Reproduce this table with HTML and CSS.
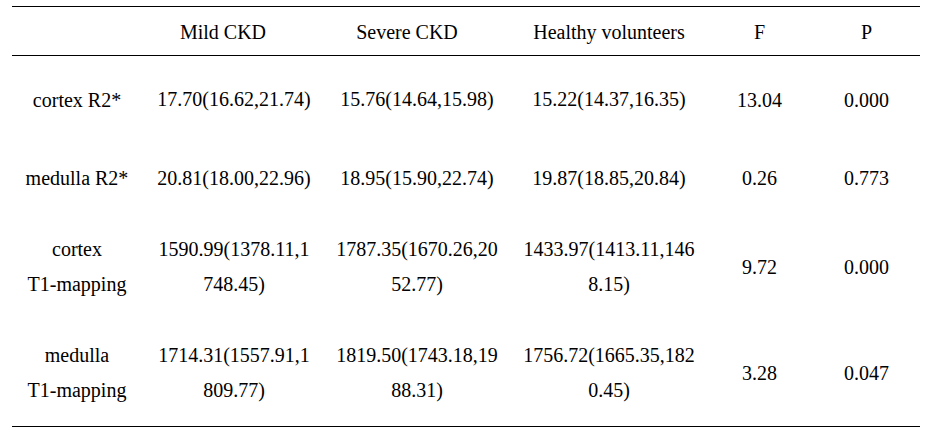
FILE: index.html
```html
<!DOCTYPE html>
<html lang="en">
<head>
<meta charset="utf-8">
<title>Table</title>
<link rel="stylesheet" href="styles.css">
</head>
<body>
<table class="data">
  <colgroup>
    <col class="w1"><col class="w2"><col class="w3"><col class="w4"><col class="w5"><col class="w6">
  </colgroup>
  <thead>
    <tr class="head">
      <th></th>
      <th>Mild CKD</th>
      <th>Severe CKD</th>
      <th>Healthy volunteers</th>
      <th>F</th>
      <th>P</th>
    </tr>
  </thead>
  <tbody>
    <tr class="r1">
      <td>cortex R2*</td>
      <td>17.70(16.62,21.74)</td>
      <td>15.76(14.64,15.98)</td>
      <td>15.22(14.37,16.35)</td>
      <td>13.04</td>
      <td>0.000</td>
    </tr>
    <tr class="r2">
      <td>medulla R2*</td>
      <td>20.81(18.00,22.96)</td>
      <td>18.95(15.90,22.74)</td>
      <td>19.87(18.85,20.84)</td>
      <td>0.26</td>
      <td>0.773</td>
    </tr>
    <tr class="r3">
      <td>cortex<br>T1-mapping</td>
      <td>1590.99(1378.11,1748.45)</td>
      <td>1787.35(1670.26,2052.77)</td>
      <td>1433.97(1413.11,1468.15)</td>
      <td>9.72</td>
      <td>0.000</td>
    </tr>
    <tr class="r4">
      <td>medulla<br>T1-mapping</td>
      <td>1714.31(1557.91,1809.77)</td>
      <td>1819.50(1743.18,1988.31)</td>
      <td>1756.72(1665.35,1820.45)</td>
      <td>3.28</td>
      <td>0.047</td>
    </tr>
  </tbody>
</table>
</body>
</html>
```

FILE: styles.css
```css
html, body {
  margin: 0;
  padding: 0;
  background: #ffffff;
}

body {
  font-family: "Liberation Serif", "Times New Roman", serif;
  font-size: 20px;
  color: #000000;
}

.data {
  margin: 6px 0 0 12px;
  width: 908px;
  border-collapse: collapse;
  table-layout: fixed;
  border-top: 1px solid #000;
  border-bottom: 1px solid #000;
}

.w1 { width: 130px; }
.w2 { width: 176px; }
.w3 { width: 194px; }
.w4 { width: 194px; }
.w5 { width: 107px; }
.w6 { width: 107px; }

.data th,
.data td {
  text-align: center;
  vertical-align: middle;
  padding: 0;
  font-weight: normal;
  word-break: break-all;
}

.data td {
  line-height: 35px;
}

.data th:nth-child(2) { padding: 2px 14px 0 0; }
.data th:nth-child(3) { padding: 2px 16px 0 0; }

.data td:nth-child(2) { padding: 0 6px 0 14px; }
.data td:nth-child(3) { padding: 0 12px 0 16px; }
.data td:nth-child(4) { padding: 0 9px; }

.head {
  height: 49px;
  border-bottom: 1px solid #000;
}

.head th {
  line-height: 24px;
  padding-top: 2px;
}

.r1 { height: 88px; }
.r1 td { padding-top: 2px; }
.r2 { height: 70px; }
.r3 { height: 107px; }
.r4 { height: 106px; }
```
